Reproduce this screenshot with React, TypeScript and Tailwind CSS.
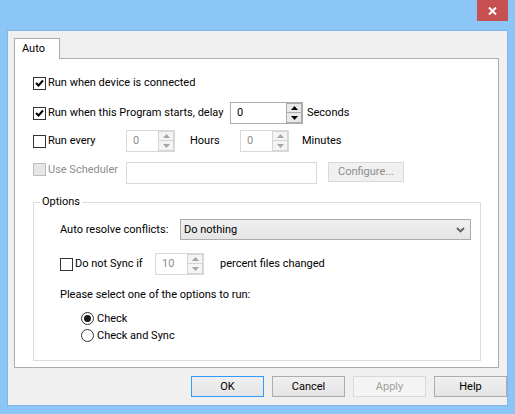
import React from "react";

const FONT = "font-['Roboto','Liberation_Sans',sans-serif]";

function Checkbox({ checked = false, disabled = false }: { checked?: boolean; disabled?: boolean }) {
  return (
    <span
      className={`flex h-[13px] w-[13px] shrink-0 items-center justify-center border ${
        disabled ? "border-[#bcbcbc] bg-[#e6e6e6]" : "border-[#333333] bg-white"
      }`}
    >
      {checked && (
        <svg width="9" height="8" viewBox="0 0 9 8" aria-hidden="true">
          <path d="M1 4 L3.5 6.5 L8 1.5" fill="none" stroke="#000" strokeWidth="2" />
        </svg>
      )}
    </span>
  );
}

function Radio({ checked = false }: { checked?: boolean }) {
  return (
    <span className="flex h-[13px] w-[13px] shrink-0 items-center justify-center rounded-full border border-[#333333] bg-white">
      {checked && <span className="h-[7px] w-[7px] rounded-full bg-[#1a1a1a]" />}
    </span>
  );
}

function Arrow({ up, disabled }: { up: boolean; disabled: boolean }) {
  const c = disabled ? "#a6a6a6" : "#000";
  return (
    <svg width="7" height="4" viewBox="0 0 7 4" aria-hidden="true">
      <path d={up ? "M0 4 L3.5 0 L7 4 Z" : "M0 0 L7 0 L3.5 4 Z"} fill={c} />
    </svg>
  );
}

function SpinBox({
  value,
  width,
  disabled = false,
}: {
  value: string;
  width: string;
  disabled?: boolean;
}) {
  const btn = disabled
    ? "border-[#d5d5d5] bg-[#f4f4f4]"
    : "border-[#acacac] bg-[#e9e9e9]";
  return (
    <div
      className={`flex h-[22px] ${width} shrink-0 border ${
        disabled ? "border-[#d9d9d9] bg-white" : "border-[#abadb3] bg-white"
      }`}
    >
      <span
        className={`flex flex-1 items-center pl-[6px] ${disabled ? "text-[#8d8d8d]" : "text-black"}`}
      >
        {value}
      </span>
      <div className="flex w-[16px] flex-col">
        <span className={`flex h-[10px] items-center justify-center border ${btn}`}>
          <Arrow up disabled={disabled} />
        </span>
        <span className={`flex h-[10px] items-center justify-center border border-t-0 ${btn}`}>
          <Arrow up={false} disabled={disabled} />
        </span>
      </div>
    </div>
  );
}

function Button({
  label,
  primary = false,
  disabled = false,
}: {
  label: string;
  primary?: boolean;
  disabled?: boolean;
}) {
  return (
    <div
      className={`flex h-[21px] w-[73px] items-center justify-center border ${
        disabled
          ? "border-[#d9d9d9] bg-[#f4f4f4] text-[#a0a0a0]"
          : primary
            ? "border-[#3399ff] bg-gradient-to-b from-[#f0f0f0] to-[#e5e5e5] text-black"
            : "border-[#acacac] bg-gradient-to-b from-[#f0f0f0] to-[#e5e5e5] text-black"
      }`}
    >
      {label}
    </div>
  );
}

export default function App() {
  return (
    <div
      className={`${FONT} flex h-[414px] w-[515px] flex-col whitespace-nowrap bg-[#8cc6f6] text-[11px] leading-[16px] text-black`}
    >
      {/* Title bar */}
      <div className="flex h-[30px] shrink-0 items-start justify-end pr-[7px]">
        <div className="flex h-[21px] w-[31px] items-center justify-center bg-[#c75050]">
          <svg width="9" height="8" viewBox="0 0 9 8" aria-hidden="true">
            <path d="M1 0.5 L8 7.5 M8 0.5 L1 7.5" stroke="#fff" strokeWidth="2" />
          </svg>
        </div>
      </div>

      {/* Client area */}
      <div className="mx-[7px] flex h-[376px] flex-col border border-[#83b5e6] bg-[#f0f0f0] pl-[6px] pt-[7px]">
        {/* Tab header */}
        <div className="flex">
          <div className="relative z-10 -mb-px flex h-[21px] w-[46px] items-center border border-b-0 border-[#acacac] bg-white pl-[7px]">
            Auto
          </div>
        </div>

        {/* Tab panel */}
        <div className="flex h-[310px] w-[485px] flex-col border border-[#acacac] bg-white pl-[18px]">
          <div className="mt-[13px] flex h-[22px] items-center gap-[2px]">
            <Checkbox checked />
            <span>Run when device is connected</span>
          </div>

          <div className="mt-[8px] flex h-[22px] items-center">
            <Checkbox checked />
            <span className="ml-[2px] min-w-[182px] pr-[2px]">Run when this Program starts, delay</span>
            <SpinBox value="0" width="w-[73px]" />
            <span className="ml-[4px]">Seconds</span>
          </div>

          <div className="mt-[6px] flex h-[22px] items-center">
            <Checkbox />
            <span className="ml-[2px] w-[78px]">Run every</span>
            <SpinBox value="0" width="w-[49px]" disabled />
            <span className="ml-[15px] w-[50px]">Hours</span>
            <SpinBox value="0" width="w-[49px]" disabled />
            <span className="ml-[13px]">Minutes</span>
          </div>

          <div className="mt-[10px] flex h-[22px] items-start">
            <span className="mt-[1px] flex items-center">
              <Checkbox disabled />
            </span>
            <span className="ml-[2px] w-[78px] text-[#8d8d8d]">Use Scheduler</span>
            <div className="h-[22px] w-[191px] border border-[#d9d9d9] bg-white" />
            <div className="ml-[11px] flex h-[20px] w-[76px] items-center justify-center border border-[#d9d9d9] bg-[#f0f0f0] text-[#8d8d8d]">
              Configure...
            </div>
          </div>

          {/* Options group */}
          <div className="relative mt-[18px] flex h-[159px] w-[448px] flex-col border border-[#dcdcdc] pl-[26px]">
            <span className="absolute -top-[9px] left-[6px] bg-white px-[2px]">Options</span>

            <div className="mt-[16px] flex h-[21px] items-center">
              <span className="w-[120px]">Auto resolve conflicts:</span>
              <div className="flex h-[21px] w-[291px] items-center justify-between border border-[#acacac] bg-gradient-to-b from-[#f0f0f0] to-[#e5e5e5] pl-[3px] pr-[5px]">
                <span>Do nothing</span>
                <svg width="9" height="6" viewBox="0 0 9 6" aria-hidden="true">
                  <path d="M1 1 L4.5 4.5 L8 1" fill="none" stroke="#606060" strokeWidth="1.8" />
                </svg>
              </div>
            </div>

            <div className="mt-[13px] flex h-[22px] items-center">
              <Checkbox />
              <span className="ml-[2px] w-[80px]">Do not Sync if</span>
              <SpinBox value="10" width="w-[49px]" disabled />
              <span className="ml-[16px]">percent files changed</span>
            </div>

            <div className="mt-[12px] flex h-[16px] items-center">
              Please select one of the options to run:
            </div>

            <div className="mt-[7px] flex h-[17px] items-center gap-[3px] pl-[21px]">
              <Radio checked />
              <span>Check</span>
            </div>
            <div className="flex h-[17px] items-center gap-[3px] pl-[21px]">
              <Radio />
              <span>Check and Sync</span>
            </div>
          </div>
        </div>

        {/* Dialog buttons */}
        <div className="mt-[8px] flex w-[493px] justify-end gap-[8px]">
          <Button label="OK" primary />
          <Button label="Cancel" />
          <Button label="Apply" disabled />
          <Button label="Help" />
        </div>
      </div>
    </div>
  );
}
